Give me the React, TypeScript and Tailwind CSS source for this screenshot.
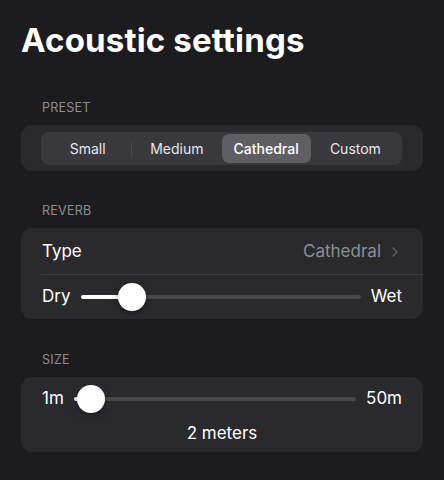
import { ChevronRight } from "lucide-react";

const presets = ["Small", "Medium", "Cathedral", "Custom"];
const selected = 2;

function Slider({ value, left, right }: { value: number; left: string; right: string }) {
  return (
    <div className="flex h-[44px] items-center gap-[10px]">
      <span className="text-[17px] text-white">{left}</span>
      <div className="relative h-[4px] flex-1 rounded-full bg-[#48484c]">
        <div className="h-full rounded-full bg-white" style={{ width: `${value * 100}%` }} />
        <div
          className="absolute top-1/2 h-[28px] w-[28px] -translate-x-1/2 -translate-y-1/2 rounded-full bg-white shadow-[0_2px_6px_rgba(0,0,0,0.35)]"
          style={{ left: `${value * 100}%` }}
        />
      </div>
      <span className="text-[17px] text-white">{right}</span>
    </div>
  );
}

function Label({ children }: { children: string }) {
  return (
    <p className="mb-[9px] ml-[21px] text-[12.5px] uppercase leading-[16px] tracking-[0.02em] text-[#8d8d92]">
      {children}
    </p>
  );
}

export default function App() {
  return (
    <div
      className="h-[480px] w-[444px] overflow-hidden bg-[#1c1c1f] px-[21px]"
      style={{ fontFamily: "Inter, 'Noto Sans', sans-serif" }}
    >
      <h1 className="pt-[20px] text-[33px] font-bold leading-[40px] tracking-[0.005em] text-white">
        Acoustic settings
      </h1>

      {/* Preset */}
      <div className="mt-[40px]">
        <Label>Preset</Label>
        <div className="rounded-[11px] bg-[#2a2a2d] pb-[6px] pl-[20px] pr-[21px] pt-[7px]">
          <div className="grid h-[33px] grid-cols-4 rounded-[8px] bg-[#39393d] p-[2px]">
            {presets.map((p, i) => (
              <div key={p} className="relative flex items-center justify-center">
                {i === selected ? (
                  <div className="flex h-full w-full items-center justify-center rounded-[7px] bg-[#5f5f63] text-[14px] font-medium text-white">
                    {p}
                  </div>
                ) : (
                  <span className="text-[14px] text-[#e6e6ea]">{p}</span>
                )}
                {i === 0 && (
                  <div className="absolute right-0 top-1/2 h-[16px] w-px -translate-y-1/2 bg-[#4a4a4e]" />
                )}
              </div>
            ))}
          </div>
        </div>
      </div>

      {/* Reverb */}
      <div className="mt-[32px]">
        <Label>Reverb</Label>
        <div className="rounded-[11px] bg-[#2a2a2d]">
          <div className="flex h-[46px] items-center justify-between pl-[21px] pr-[20px] pt-[2px]">
            <span className="text-[17px] text-white">Type</span>
            <span className="flex items-center gap-[6px] text-[17px] text-[#8e8e93]">
              Cathedral
              <ChevronRight size={16} strokeWidth={2.5} className="text-[#5c5c60]" />
            </span>
          </div>
          <div className="ml-[20px] h-px bg-[#3a3a3d]" />
          <div className="pl-[21px] pr-[21px]">
            <Slider value={0.183} left="Dry" right="Wet" />
          </div>
        </div>
      </div>

      {/* Size */}
      <div className="mt-[33px]">
        <Label>Size</Label>
        <div className="rounded-[11px] bg-[#2a2a2d] px-[21px] pb-[6px]">
          <Slider value={0.062} left="1m" right="50m" />
          <p className="pb-[2px] pt-[1px] text-center text-[17px] leading-[22px] text-white">2 meters</p>
        </div>
      </div>
    </div>
  );
}
